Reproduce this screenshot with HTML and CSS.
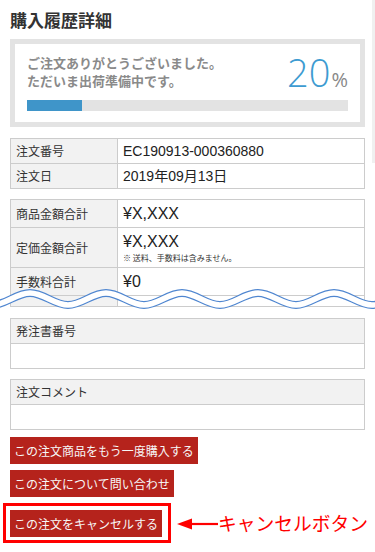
FILE: index.html
```html
<!DOCTYPE html>
<html lang="ja">
<head>
<meta charset="utf-8">
<title>購入履歴詳細</title>
<link rel="stylesheet" href="styles.css">
</head>
<body>
<div class="page">
  <h1 class="title">購入履歴詳細</h1>

  <div class="progress-box">
    <div class="progress-top">
      <p class="progress-msg">ご注文ありがとうございました。<br>ただいま出荷準備中です。</p>
      <div class="progress-pct"><span class="num">20</span><span class="unit">%</span></div>
    </div>
    <div class="bar"><div class="bar-fill" style="width:17%"></div></div>
  </div>

  <table class="info order">
    <tr><td class="label">注文番号</td><td class="value">EC190913-000360880</td></tr>
    <tr><td class="label">注文日</td><td class="value">2019年09月13日</td></tr>
  </table>

  <div class="price-wrap">
    <table class="info price">
      <tr class="r28"><td class="label">商品金額合計</td><td class="value"><span class="amount">¥X,XXX</span></td></tr>
      <tr class="r40"><td class="label">定価金額合計</td><td class="value"><span class="amount">¥X,XXX</span><span class="tax-note">※ 送料、手数料は含みません。</span></td></tr>
      <tr class="r28"><td class="label">手数料合計</td><td class="value"><span class="amount">¥0</span></td></tr>
      <tr class="r-cut"><td class="label"></td><td class="value"></td></tr>
    </table>
    <svg class="wave" width="375" height="30" viewBox="0 0 375 30" aria-hidden="true">
      <path d="M -8 20 C 5.8 20 16.2 8 30 8 S 54.2 20 68 20 S 92.2 8 106 8 S 130.2 20 144 20 S 168.2 8 182 8 S 206.2 20 220 20 S 244.2 8 258 8 S 282.2 20 296 20 S 320.2 8 334 8 S 358.2 20 372 20 S 396.2 8 410 8" fill="none" stroke="#4f86d0" stroke-width="8"/>
      <path d="M -8 20 C 5.8 20 16.2 8 30 8 S 54.2 20 68 20 S 92.2 8 106 8 S 130.2 20 144 20 S 168.2 8 182 8 S 206.2 20 220 20 S 244.2 8 258 8 S 282.2 20 296 20 S 320.2 8 334 8 S 358.2 20 372 20 S 396.2 8 410 8" fill="none" stroke="#ffffff" stroke-width="5.6"/>
    </svg>
  </div>

  <div class="field-box">
    <div class="field-head">発注書番号</div>
    <div class="field-body"></div>
  </div>

  <div class="field-box">
    <div class="field-head">注文コメント</div>
    <div class="field-body"></div>
  </div>

  <div class="actions">
    <a class="btn" href="#">この注文商品をもう一度購入する</a>
    <a class="btn" href="#">この注文について問い合わせ</a>
    <div class="cancel-row">
      <div class="highlight"><a class="btn" href="#">この注文をキャンセルする</a></div>
      <svg class="arrow" width="41" height="12" viewBox="0 0 41 12" aria-hidden="true">
        <polygon points="0,6 15,0.5 15,11.5" fill="#ff0000"/>
        <line x1="14" y1="6" x2="41" y2="6" stroke="#ff0000" stroke-width="2.2"/>
      </svg>
      <span class="callout">キャンセルボタン</span>
    </div>
  </div>

  <div class="scroll-hint"></div>
</div>
</body>
</html>
```

FILE: styles.css
```css
html, body {
  margin: 0;
  padding: 0;
  background: #ffffff;
}

body {
  font-family: "Liberation Sans", "Noto Sans CJK JP", sans-serif;
  color: #333333;
}

.page {
  position: relative;
  padding: 0 10px;
}

.title {
  margin: 0;
  padding-top: 8px;
  font-family: "Noto Sans CJK JP", sans-serif;
  font-size: 17px;
  line-height: 24px;
  font-weight: 700;
  color: #333333;
}

/* progress */
.progress-box {
  margin-top: 7px;
  border: 5px solid #e3e3e3;
  padding: 10px 12px 11px;
}

.progress-top {
  display: flex;
  justify-content: space-between;
  align-items: flex-end;
  height: 36px;
}

.progress-msg {
  margin: 0;
  font-family: "Noto Sans CJK JP", sans-serif;
  font-size: 13px;
  line-height: 18px;
  font-weight: 700;
  color: #8a8a8a;
}

.progress-pct {
  height: 36px;
  line-height: 36px;
  white-space: nowrap;
  font-family: "Open Sans", sans-serif;
}

.num {
  font-size: 38px;
  font-weight: 300;
  color: #3d9bd1;
}

.unit {
  font-size: 20px;
  font-weight: 400;
  color: #888888;
  margin-left: 1px;
}

.bar {
  margin-top: 10px;
  height: 11px;
  background: #e3e3e3;
}

.bar-fill {
  height: 100%;
  background: #3f95c9;
}

/* tables */
.info {
  width: 100%;
  border-collapse: collapse;
  table-layout: fixed;
}

.info td {
  border: 1px solid #cccccc;
  padding: 0 5px;
  font-size: 14px;
  color: #222222;
  vertical-align: middle;
}

.info td.label {
  width: 96px;
  background: #f2f2f2;
  font-family: "Noto Sans CJK JP", sans-serif;
  font-size: 12px;
  color: #333333;
}

.order {
  margin-top: 11px;
}

.order td {
  height: 24px;
  line-height: 16px;
}

.price-wrap {
  position: relative;
  margin-top: 10px;
}

.price .r28 td {
  height: 27px;
  line-height: 18px;
}

.price .r40 td {
  height: 39px;
}

.price .r-cut td {
  height: 10px;
  padding: 0;
}

.amount {
  display: block;
  font-size: 16px;
  line-height: 20px;
}

.tax-note {
  display: block;
  font-family: "Noto Sans CJK JP", sans-serif;
  font-size: 8px;
  line-height: 11px;
  color: #333333;
}

.wave {
  position: absolute;
  left: -10px;
  top: 86px;
  display: block;
}

/* fields */
.field-box {
  margin-top: 11px;
  border: 1px solid #cccccc;
}

.field-box + .field-box {
  margin-top: 10px;
}

.field-head {
  height: 24px;
  line-height: 24px;
  padding: 0 5px;
  background: #f2f2f2;
  border-bottom: 1px solid #cccccc;
  font-family: "Noto Sans CJK JP", sans-serif;
  font-size: 12px;
  color: #333333;
}

.field-body {
  height: 24px;
}

/* buttons */
.actions {
  margin-top: 7px;
  display: flex;
  flex-direction: column;
  align-items: flex-start;
  gap: 6px;
}

.btn {
  display: block;
  height: 27px;
  line-height: 27px;
  padding: 0 4px;
  background: #b5231c;
  color: #f7f7f7;
  font-family: "Noto Sans CJK JP", sans-serif;
  font-size: 12px;
  text-decoration: none;
  white-space: nowrap;
}

.cancel-row {
  display: flex;
  align-items: center;
  margin-left: -7px;
}

.highlight {
  border: 3px solid #ff0000;
  padding: 4px 6px 3px 4px;
}

.arrow {
  display: block;
  margin-left: 6px;
  margin-top: 1px;
}

.callout {
  font-family: "Noto Sans CJK JP", sans-serif;
  font-size: 18.75px;
  line-height: 24px;
  color: #ff0000;
  white-space: nowrap;
}

.scroll-hint {
  position: absolute;
  top: 0;
  right: 0;
  width: 3px;
  height: 163px;
  background: #f0f0f0;
}
```
